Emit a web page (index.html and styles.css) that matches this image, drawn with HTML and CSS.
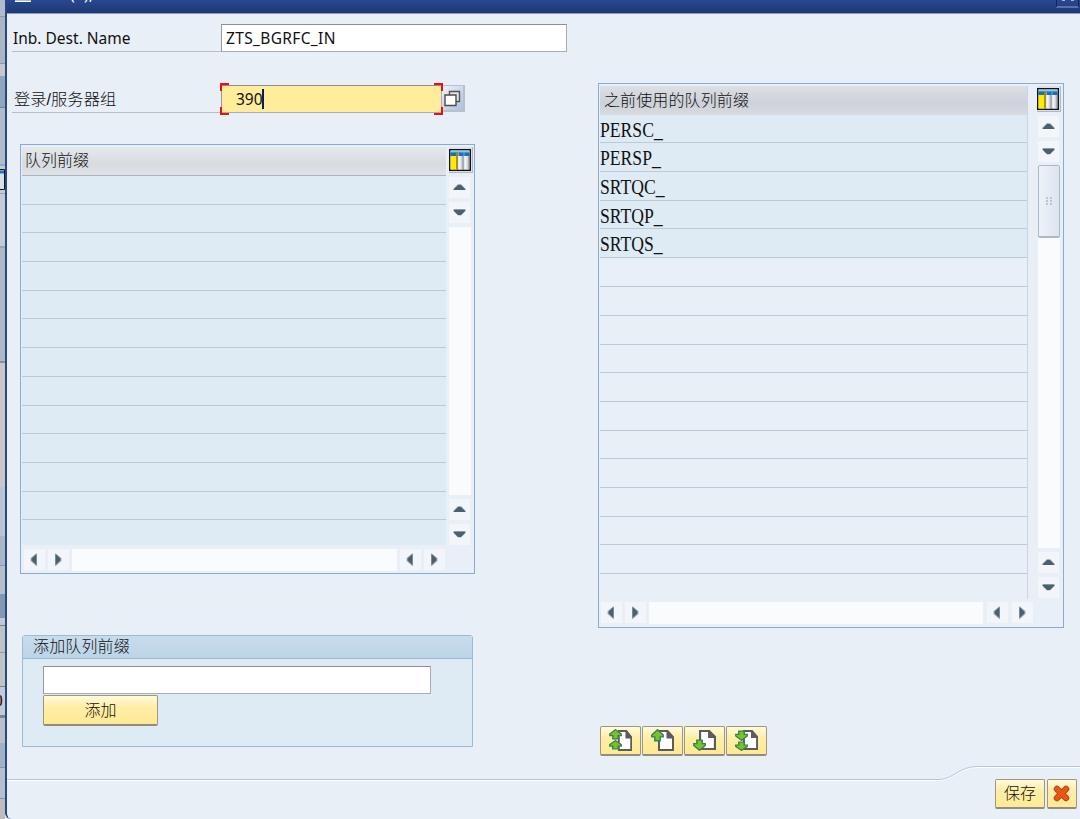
FILE: index.html
```html
<!DOCTYPE html>
<html lang="zh-CN">
<head>
<meta charset="utf-8">
<title>Inb. Dest. Name</title>
<link rel="stylesheet" href="styles.css">
</head>
<body>
<svg class="defs" width="0" height="0">
  <defs>
    <linearGradient id="sky" x2="0" y2="1"><stop stop-color="#9ad0ee"/><stop offset="1" stop-color="#6fb3de"/></linearGradient>
    <linearGradient id="gray"><stop stop-color="#fff"/><stop offset=".55" stop-color="#dcdde2"/><stop offset="1" stop-color="#85878f"/></linearGradient>
    <symbol id="up" viewBox="0 0 21 21"><path d="M4 13V12L9 7h3l5 5v1z" fill="#a9b5be"/><path d="M5 13v-1l4-4h3l4 4v1z" fill="#4b5f6d"/></symbol>
    <symbol id="down" viewBox="0 0 21 21"><path d="M4 7.500v1l5 5h3l5-5v-1z" fill="#a9b5be"/><path d="M5 7.500v1.500l4 4h3l4-4v-1.500z" fill="#4b5f6d"/></symbol>
    <symbol id="left" viewBox="0 0 21 21"><path d="M13 4.500h-1L6.500 9v3l5.500 5h1z" fill="#a9b5be"/><path d="M12.500 5L7.500 9.500v2l5 4.500z" fill="#4b5f6d"/></symbol>
    <symbol id="right" viewBox="0 0 21 21"><path d="M7 4.500h1L13.500 9v3L8 17H7z" fill="#a9b5be"/><path d="M7.500 5l5 4.500v2l-5 4.500z" fill="#4b5f6d"/></symbol>
    <symbol id="cols" viewBox="0 0 22 22">
      <rect x=".7" y=".7" width="20.600" height="20.600" fill="#c9cdd3" stroke="#111" stroke-width="1.400"/>
      <rect x="1.500" y="1.500" width="19" height="2.500" fill="url(#sky)"/><rect x="1.500" y="3.500" width="19" height="3.500" fill="#1b6fb8"/>
      <rect x="1.500" y="7" width="6.500" height="13.500" fill="#ffea00"/><path d="M8 3v17.500" stroke="#9d8d10" stroke-width="1.800"/>
      <rect x="9.500" y="7" width="5" height="13.500" fill="url(#gray)"/><rect x="15.500" y="7" width="5" height="13.500" fill="url(#gray)"/>
      <path d="M9.500 3.500v3.500M15 3.500v3.500" stroke="#67aee0"/>
    </symbol>
    <symbol id="page" viewBox="0 0 16 20" preserveAspectRatio="none"><path d="M1 1h8l6 6v12H1z" fill="#fff" stroke="#5c5c5c" stroke-width="2"/><path d="M8.500 0h1.500l6 6.500V8H8.500z" fill="#5c5c5c"/></symbol>
    <symbol id="aup" viewBox="0 0 12 12" preserveAspectRatio="none"><path d="M6 .7L11.300 5.500v1.800H8.500v3.500h-5V7.300H.7V5.500z" fill="#7cc127" stroke="#35805a" stroke-width="1.300"/></symbol>
    <symbol id="adown" viewBox="0 0 12 12" preserveAspectRatio="none"><path d="M6 11.300L.7 6.500V4.700h2.800V1.200h5v3.500h2.800v1.800z" fill="#7cc127" stroke="#35805a" stroke-width="1.300"/></symbol>
  </defs>
</svg>
<div class="backdrop">
  <svg class="peek" width="5" height="819"><path d="M0 169.500h4.500v20H0" fill="#dcdfe4" stroke="#151515"/><path d="M0 172h4" stroke="#1b78b8" stroke-width="3"/><path d="M0 696c2 0 2 9 0 9" fill="#e08a20" stroke="#182448" stroke-width="1.500"/></svg>
</div>
<div class="dialog">
  <div class="title"><i class="title-icon"></i><span>(1),</span><i class="close"><b></b><b></b></i></div>
  <div class="content">
    <div class="col-left">
      <div class="field first"><label>Inb. Dest. Name</label><div class="input dest">ZTS_BGRFC_IN</div></div>
      <div class="field second"><label class="cn">登录/服务器组</label>
        <div class="input focus"><span>390</span><i class="caret"></i><i class="c tl"></i><i class="c tr"></i><i class="c bl"></i><i class="c br"></i></div>
        <div class="f4"><svg width="17" height="17"><path d="M5.500 1.500h10v10h-10z" fill="#e4e4e4" stroke="#555" stroke-width="1.400"/><path d="M1 5h11v10.500H1z" fill="#fff" stroke="#4c4c4c" stroke-width="1.400"/></svg></div>
      </div>
      <div class="table t1">
        <div class="upper">
          <div class="grid"><div class="head">队列前缀</div><div class="rows"></div></div>
          <div class="vbar"><div class="cfg"><svg width="22" height="22"><use href="#cols"/></svg></div>
            <svg class="a"><use href="#up"/></svg><svg class="a"><use href="#down"/></svg><div class="track"></div><svg class="a"><use href="#up"/></svg><svg class="a"><use href="#down"/></svg></div>
        </div>
        <div class="hbar"><svg class="a"><use href="#left"/></svg><svg class="a"><use href="#right"/></svg><div class="track"></div><svg class="a"><use href="#left"/></svg><svg class="a"><use href="#right"/></svg></div>
      </div>
      <div class="group">
        <div class="group-title">添加队列前缀</div>
        <div class="input add-input"></div>
        <div class="btn add">添加</div>
      </div>
    </div>
    <div class="col-right">
      <div class="table t2">
        <div class="upper">
          <div class="grid"><div class="head">之前使用的队列前缀</div>
            <div class="rows"><div class="row"><span>PERSC_</span></div><div class="row"><span>PERSP_</span></div><div class="row"><span>SRTQC_</span></div><div class="row"><span>SRTQP_</span></div><div class="row"><span>SRTQS_</span></div></div></div>
          <div class="vbar"><div class="cfg"><svg width="22" height="22"><use href="#cols"/></svg></div>
            <svg class="a"><use href="#up"/></svg><svg class="a"><use href="#down"/></svg><div class="track"><div class="thumb"><i></i><i></i></div></div><svg class="a"><use href="#up"/></svg><svg class="a"><use href="#down"/></svg></div>
        </div>
        <div class="hbar"><svg class="a"><use href="#left"/></svg><svg class="a"><use href="#right"/></svg><div class="track"></div><svg class="a"><use href="#left"/></svg><svg class="a"><use href="#right"/></svg></div>
      </div>
      <div class="tools">
        <div class="btn tool"><svg width="41" height="30"><use href="#page" x="18" y="4" width="14" height="21"/><use href="#aup" x="9" y="3" width="13" height="11"/><use href="#aup" x="9" y="14" width="13" height="10"/></svg></div>
        <div class="btn tool"><svg width="41" height="30"><use href="#page" x="16" y="4" width="16" height="21"/><use href="#aup" x="9" y="3" width="13" height="13"/></svg></div>
        <div class="btn tool"><svg width="41" height="30"><use href="#page" x="15" y="4" width="17" height="20"/><use href="#adown" x="9" y="13" width="13" height="12"/></svg></div>
        <div class="btn tool"><svg width="41" height="30"><use href="#page" x="17" y="4" width="15" height="20"/><use href="#adown" x="9" y="4" width="13" height="11"/><use href="#adown" x="9" y="15" width="13" height="10"/></svg></div>
      </div>
    </div>
  </div>
  <div class="footer">
    <svg class="curve" width="1073" height="16"><path d="M0 14.500h932c14 0 20-13 38-13h103" fill="none" stroke="#fff"/><path d="M0 13.500h932c14 0 20-13 38-13h103" fill="none" stroke="#b9c6d6"/></svg>
    <div class="btn save">保存</div>
    <div class="btn cancel"><svg width="18" height="18"><path d="M4 4l9 9M13 4L4 13" stroke="#b8432a" stroke-width="6.500" stroke-linecap="round"/><path d="M4 4l9 9M13 4L4 13" stroke="#e8590f" stroke-width="4.500" stroke-linecap="round"/></svg></div>
  </div>
</div>
</body>
</html>
```
FILE: styles.css
```css
* { box-sizing: border-box; }
body { margin: 0; width: 1080px; height: 819px; overflow: hidden; display: flex; background: #e8eff6; color: #111; font: 16px "Noto Sans", "Noto Sans CJK SC", sans-serif; }
.defs { position: absolute; }
.backdrop { width: 5px; background: linear-gradient(#aebdcb 0 16px, #8a9cad 16px 17px, #a9b7c3 17px 63px, #8a99a5 63px 64px, #c5c9cc 64px 76px, #8ba8c0 76px 77px, #8fa7bd 77px 107px, #6286a6 107px 108px, #aebdc9 108px 164px, #8faac2 164px 166px, #c3cbd3 166px 193px, #93a8bd 193px 194px, #c5cbd3 194px 246px, #98a7b5 246px 248px, #acb8c3 248px 361px, #8192a1 361px 363px, #c8c8c8 363px 487px, #bac5d2 487px 536px, #a9b8c6 536px 565px, #7f9bb5 565px 566px, #b5bfc8 566px 594px, #8199af 594px 618px, #c0cbd4 618px 625px, #777f86 625px 626px, #bec3c6 626px 652px, #969da2 652px 653px, #c0c4c7 653px 686px, #7d858c 686px 687px, #c1cbd6 687px 715px, #7d858c 715px 718px, #b9c1c8 718px 743px, #9fb2c6 743px 767px, #7898b5 767px 768px, #b4c1cc 768px 798px, #7898b5 798px 799px, #bdbdbd 799px); }
.peek { display: block; }
.dialog { width: 1075px; height: 819px; border-left: 2px solid #2c4682; border-bottom-left-radius: 6px; background: #e8eff6; display: flex; flex-direction: column; }
.title { height: 14px; flex: none; background: linear-gradient(#294890, #1d3873); border-bottom: 1px solid #8b9dbd; display: flex; overflow: hidden; color: #fff; line-height: 16px; }
.title-icon { width: 16px; height: 2px; margin-left: 8px; border-bottom: 1px solid #fff; background: #aebdd8; }
.title span { margin: -14px 0 0 39px; }
.close { margin-left: auto; width: 23px; height: 8px; border: 1px solid #10275d; border-top: 0; border-bottom: 2px solid #5472ad; display: flex; justify-content: center; gap: 6px; margin-right: 1px; }
.close b { width: 3px; height: 1px; background: #94b9f1; }
.content { height: 752px; flex: none; display: flex; }
.col-left { width: 591px; padding-top: 10px; }
.field { display: flex; padding-left: 5px; }
.field label { width: 210px; height: 28px; border-bottom: 1px solid #b9bec3; padding-left: 1px; line-height: 29px; font-size: 15.500px; white-space: nowrap; }
label.cn, .head, .group-title, .btn { font-family: "Liberation Sans", "Noto Sans CJK SC", sans-serif; font-weight: 300; font-size: 16px; }
.input { background: #fff; border: 1px solid #a9adb1; border-top: 1px solid #8f8f8f; border-left: 1px solid #999; line-height: 27px; padding-left: 4px; font-size: 15.500px; }
.dest { width: 346px; height: 28px; margin-left: -1px; letter-spacing: .35px; }
.second { margin-top: 33px; }
.focus { position: relative; width: 221px; height: 28px; background: #ffed9c; padding-left: 14px; display: flex; margin-left: -1px; }
.field label.cn { font-size: 16.300px; line-height: 29px; padding-left: 2px; }
.caret { width: 2px; height: 20px; background: #071b63; margin-top: 3px; margin-left: -1px; }
.c { position: absolute; width: 9px; height: 8px; border: 0 solid #e80f19; }
.tl { left: -2px; top: -3px; border-width: 2px 0 0 2px; }
.tr { right: -2px; top: -3px; border-width: 2px 2px 0 0; }
.bl { left: -2px; bottom: -3px; border-width: 0 0 2px 2px; }
.br { right: -2px; bottom: -3px; border-width: 0 2px 2px 0; }
.f4 { width: 23px; height: 27px; border: 1px solid #b9c0c8; border-width: 1px 2px 2px 0; background: linear-gradient(135deg, #edf2f8, #aebfdd); padding: 4px 0 0 2px; }
.table { border: 1px solid #8aabd0; padding: 2px 1px 0; }
.t1 { margin: 31px 0 0 13px; width: 455px; height: 430px; }
.upper { display: flex; }
.t1 .upper { height: 398px; }
.grid { width: 426px; display: flex; flex-direction: column; }
.head { height: 29px; flex: none; background: linear-gradient(#e5e8eb, #d8dce1 60%, #dfe2e6); border-bottom: 1px solid #a6b4c6; line-height: 28px; padding-left: 3px; }
.rows { flex: 1; background: repeating-linear-gradient(transparent 0 27.700px, #bccad8 27.700px 28.700px); background-color: #deebf5; }
.vbar { margin-left: 2px; width: 25px; display: flex; flex-direction: column; gap: 4px; }
.t1 .vbar { padding-left: 1px; }
.cfg { width: 24px; height: 26px; background: #dce1e8; border: 1px solid #aeb7c3; border-width: 0 1px 1px 0; padding: 2px 0 0 0; }
.a { display: block; width: 21px; height: 21px; background: #f2f5f9; flex: none; }
.track { flex: 1; background: #fafbfc; }
.vbar .track { width: 22px; }
.hbar { display: flex; height: 22px; margin: 4px 0 0 2px; gap: 3px; width: 421px; }
.group { margin: 61px 0 0 15px; width: 451px; height: 112px; border: 1px solid #9bbad5; background: #deebf4; border-radius: 3px 3px 0 0; display: flex; flex-direction: column; }
.group-title { height: 23px; background: linear-gradient(#c9dcec, #bcd4e8); border-bottom: 1px solid #9bbad5; line-height: 21px; padding-left: 10px; letter-spacing: .15px; }
.add-input { width: 388px; height: 28px; margin: 7px 0 0 20px; }
.btn { border: 1px solid #9e967e; border-bottom: 2px solid #8f8d7f; border-radius: 2px; background: linear-gradient(#fffadc, #ffeea7 40%, #ffe993); text-align: center; }
.add { margin: 1px 0 0 20px; width: 115px; height: 31px; line-height: 29px; }
.t2 { width: 466px; height: 545px; margin-top: 69px; }
.t2 .upper { height: 513px; }
.t2 .grid { width: 428px; border-right: 1px solid #c9d4e1; }
.t2 .head { height: 28.600px; background: linear-gradient(#dcdfe4, #cdd1d9 60%, #d8dce0); border-bottom: 0; line-height: 29px; padding-left: 4px; letter-spacing: .12px; }
.t2 .rows { background-color: #e8eff6; }
.row { height: 28.700px; background: #deebf5; border-bottom: 1px solid #bccad8; font: 21px/30px "Liberation Serif", serif; }
.row span { display: inline-block; transform: scaleX(.84); transform-origin: left; }
.t2 .vbar { margin-left: 9px; padding-bottom: 1px; }
.t2 .a { margin-left: 1px; }
.t2 .vbar .track { margin-left: 1px; margin-top: -1px; }
.thumb { height: 73px; border: 1px solid #aab8c7; border-bottom-width: 2px; background: linear-gradient(90deg, #edf2f8, #dce5f0); display: flex; align-items: center; justify-content: center; gap: 2px; border-radius: 2px; }
.thumb i { width: 2px; height: 9px; background: repeating-linear-gradient(#bdc4cd 0 2px, transparent 2px 3px); }
.t2 .hbar { width: 433px; gap: 3px; margin: 3px 0 0; }
.t2 .hbar .a:nth-child(2) { margin-left: 0; }
.tools { display: flex; gap: 1px; margin: 98px 0 0 2px; }
.tool { width: 41px; height: 30px; }
.tool svg { display: block; margin: -1px; }
.footer { height: 53px; display: flex; gap: 3px; justify-content: flex-end; padding: 13px 3px 0 0; position: relative; }
.curve { position: absolute; left: 0; top: 0; }
.save { width: 50px; height: 30px; line-height: 27px; margin-right: -1px; }
.cancel { width: 30px; height: 30px; padding-top: 5px; }
.btn svg { position: relative; }
```
